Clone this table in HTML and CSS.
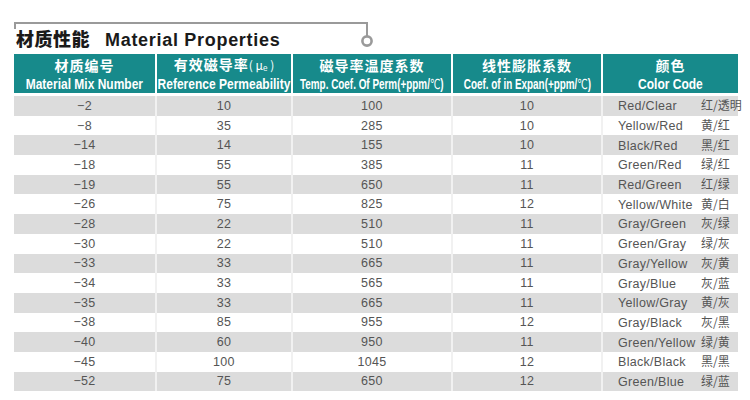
FILE: index.html
```html
<!DOCTYPE html>
<html lang="zh">
<head>
<meta charset="utf-8">
<title>Material Properties</title>
<link rel="stylesheet" href="styles.css">
</head>
<body>
<div class="page">
  <div class="title-block">
    <svg class="bracket" width="362" height="28" viewBox="0 0 362 28">
      <path d="M1 7 V1 H353 V14" fill="none" stroke="#9a9a9a" stroke-width="2"/>
      <circle cx="353" cy="19" r="4.6" fill="#fff" stroke="#9a9a9a" stroke-width="2.6"/>
    </svg>
    <h1 class="title"><span class="title-cn">材质性能</span><span class="title-en">Material Properties</span></h1>
  </div>
  <table class="props">
    <colgroup>
      <col class="c1"><col class="c2"><col class="c3"><col class="c4"><col class="c5">
    </colgroup>
    <thead>
      <tr>
        <th><div class="cn">材质编号</div><div class="en"><span>Material Mix Number</span></div></th>
        <th><div class="cn">有效磁导率<span class="mu">( μₑ )</span></div><div class="en"><span>Reference Permeability</span></div></th>
        <th><div class="cn">磁导率温度系数</div><div class="en narrow"><span>Temp. Coef. Of Perm(+ppm/<i class="deg">℃</i>)</span></div></th>
        <th><div class="cn">线性膨胀系数</div><div class="en narrow"><span>Coef. of in Expan(+ppm/<i class="deg">℃</i>)</span></div></th>
        <th><div class="cn">颜色</div><div class="en"><span>Color Code</span></div></th>
      </tr>
    </thead>
    <tbody>
      <tr><td>−2</td><td>10</td><td>100</td><td>10</td><td class="color"><span class="ce">Red/Clear</span><span class="cc">红/透明</span></td></tr>
      <tr><td>−8</td><td>35</td><td>285</td><td>10</td><td class="color"><span class="ce">Yellow/Red</span><span class="cc">黄/红</span></td></tr>
      <tr><td>−14</td><td>14</td><td>155</td><td>10</td><td class="color"><span class="ce">Black/Red</span><span class="cc">黑/红</span></td></tr>
      <tr><td>−18</td><td>55</td><td>385</td><td>11</td><td class="color"><span class="ce">Green/Red</span><span class="cc">绿/红</span></td></tr>
      <tr><td>−19</td><td>55</td><td>650</td><td>11</td><td class="color"><span class="ce">Red/Green</span><span class="cc">红/绿</span></td></tr>
      <tr><td>−26</td><td>75</td><td>825</td><td>12</td><td class="color"><span class="ce">Yellow/White</span><span class="cc">黄/白</span></td></tr>
      <tr><td>−28</td><td>22</td><td>510</td><td>11</td><td class="color"><span class="ce">Gray/Green</span><span class="cc">灰/绿</span></td></tr>
      <tr><td>−30</td><td>22</td><td>510</td><td>11</td><td class="color"><span class="ce">Green/Gray</span><span class="cc">绿/灰</span></td></tr>
      <tr><td>−33</td><td>33</td><td>665</td><td>11</td><td class="color"><span class="ce">Gray/Yellow</span><span class="cc">灰/黄</span></td></tr>
      <tr><td>−34</td><td>33</td><td>565</td><td>11</td><td class="color"><span class="ce">Gray/Blue</span><span class="cc">灰/蓝</span></td></tr>
      <tr><td>−35</td><td>33</td><td>665</td><td>11</td><td class="color"><span class="ce">Yellow/Gray</span><span class="cc">黄/灰</span></td></tr>
      <tr><td>−38</td><td>85</td><td>955</td><td>12</td><td class="color"><span class="ce">Gray/Black</span><span class="cc">灰/黑</span></td></tr>
      <tr><td>−40</td><td>60</td><td>950</td><td>11</td><td class="color"><span class="ce">Green/Yellow</span><span class="cc">绿/黄</span></td></tr>
      <tr><td>−45</td><td>100</td><td>1045</td><td>12</td><td class="color"><span class="ce">Black/Black</span><span class="cc">黑/黑</span></td></tr>
      <tr><td>−52</td><td>75</td><td>650</td><td>12</td><td class="color"><span class="ce">Green/Blue</span><span class="cc">绿/蓝</span></td></tr>
    </tbody>
  </table>
</div>
</body>
</html>
```
FILE: styles.css
```css
html, body {
  margin: 0;
  padding: 0;
  background: #fff;
}
.page {
  padding: 22px 0 0 14px;
  font-family: "Liberation Sans", Arial, "Noto Sans CJK SC", sans-serif;
}
.title-block {
  position: relative;
  height: 32px;
}
.bracket {
  position: absolute;
  top: 0;
  left: 0;
}
.title {
  margin: 0;
  padding: 6px 0 0 2px;
  font-size: 18px;
  line-height: 20px;
  font-weight: bold;
  color: #1a1a1a;
  display: flex;
  align-items: baseline;
}
.title-cn {
  font-family: "Noto Sans CJK SC", sans-serif;
  font-weight: 900;
  letter-spacing: 0.5px;
}
.title-en {
  margin-left: 15px;
  font-family: "Liberation Sans", Arial, sans-serif;
  font-size: 18px;
  letter-spacing: 0.7px;
}
.props {
  width: 724px;
  border-spacing: 0;
  border-collapse: separate;
  table-layout: fixed;
}
.c1 { width: 141px; }
.c2 { width: 136px; }
.c3 { width: 160px; }
.c4 { width: 150px; }
.c5 { width: 137px; }
.props th {
  background: #178a8b;
  color: #fff;
  height: 39px;
  padding: 0;
  border-bottom: 3px solid #fff;
  border-left: 2px solid #fff;
  text-align: center;
  vertical-align: middle;
}
.props th:first-child,
.props td:first-child {
  border-left: none;
}
.cn {
  font-family: "Noto Sans CJK SC", sans-serif;
  font-size: 14px;
  font-weight: bold;
  line-height: 20px;
  letter-spacing: 1px;
}
.mu {
  font-weight: normal;
  font-size: 12px;
  letter-spacing: 0;
}
.en {
  display: flex;
  justify-content: center;
  font-family: "Liberation Sans", Arial, sans-serif;
  font-size: 15px;
  line-height: 18px;
  font-weight: bold;
  white-space: nowrap;
}
.en span {
  display: inline-block;
  transform: scaleX(0.8);
  transform-origin: center;
}
.en.narrow span {
  transform: scaleX(0.66);
}
.deg {
  font-style: normal;
  font-family: "DejaVu Sans", sans-serif;
  font-size: 14px;
  font-weight: normal;
}
.props td {
  height: 19.7px;
  padding: 0;
  border-left: 2px solid #f1f1f1;
  text-align: center;
  vertical-align: middle;
  font-size: 12.5px;
  letter-spacing: 0.3px;
  color: #555;
  line-height: 14px;
}
.props tbody tr:nth-child(odd) td {
  background: #dcdcdc;
}
.props td.color {
  text-align: left;
  padding-left: 15px;
  white-space: nowrap;
}
.ce {
  display: inline-block;
  min-width: 80px;
  padding-right: 3px;
}
.cc {
  font-family: "Noto Sans CJK SC", sans-serif;
  font-size: 12px;
  letter-spacing: 0;
}
```
